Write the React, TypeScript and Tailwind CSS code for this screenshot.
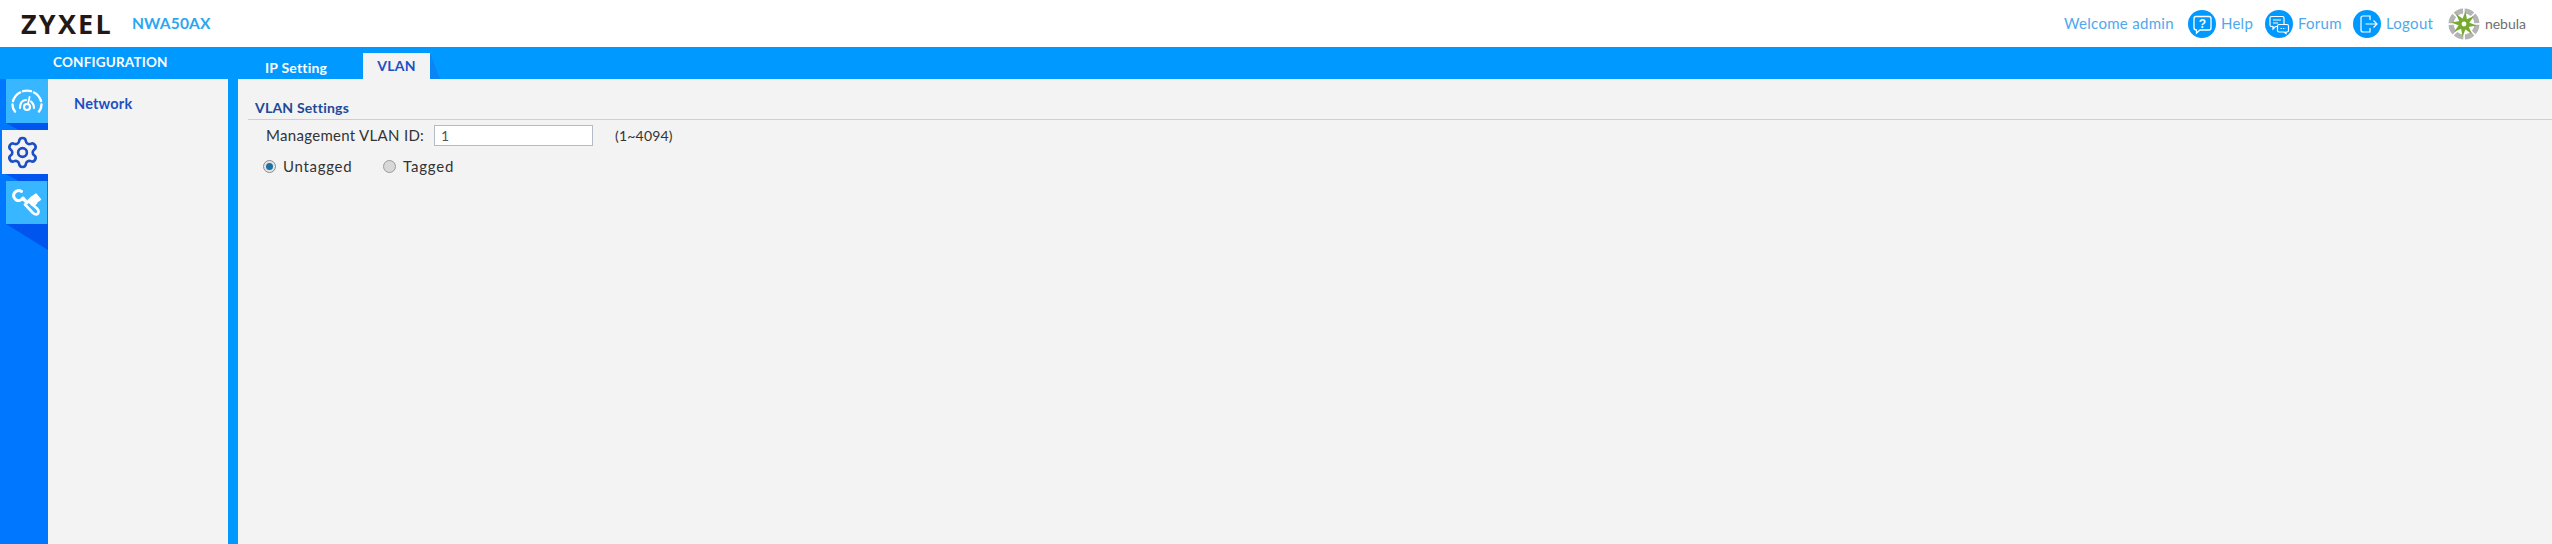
import { Settings } from 'lucide-react';

const NebulaLogo = () => {
    const angles = [0, 45, 90, 135, 180, 225, 270, 315];
    return (
        <svg width="32" height="32" viewBox="-17 -17 34 34">
            {angles.map((a) => (
                <g key={a} transform={`rotate(${a + 22})`}>
                    <path d="M-5.5 -15.5 Q0 -17.5 5.5 -15.5 L3.5 -10.5 Q0 -11.5 -3.5 -10.5 Z" fill="#b4b4b4" />
                </g>
            ))}
            {angles.map((a) => (
                <g key={a} transform={`rotate(${a})`}>
                    <path d="M-3 -1.5 L1.5 -13.5 L3.5 -3 Z" fill="#76ab2f" />
                </g>
            ))}
            <circle r="2.6" fill="#ffffff" />
        </svg>
    );
};

const HelpIcon = () => (
    <svg width="28" height="28" viewBox="0 0 28 28" fill="none" stroke="white" strokeWidth="1.3">
        <path d="M8 6.5H21Q23 6.5 23 8.5V18Q23 20 21 20H12L8.5 23V20Q6 20 6 18V8.5Q6 6.5 8 6.5Z" />
        <text x="14.5" y="17.5" fill="white" stroke="none" fontSize="12" fontWeight="700" textAnchor="middle" fontFamily="Liberation Sans, sans-serif">?</text>
    </svg>
);

const ForumIcon = () => (
    <svg width="28" height="28" viewBox="0 0 28 28" fill="none" stroke="white" strokeWidth="1.2">
        <path d="M6.5 6.5H17.5Q19 6.5 19 8V15Q19 16.5 17.5 16.5H10.5L8 19V16.5H6.5Q5 16.5 5 15V8Q5 6.5 6.5 6.5Z" />
        <path d="M8 10H16M8 13H13" />
        <path d="M14 14.5H22Q23.5 14.5 23.5 16V20.5Q23.5 22 22 22H21V23.5L19 22H14Q12.5 22 12.5 20.5V16Q12.5 14.5 14 14.5Z" fill="#0099ff" />
        <path d="M15.5 18.5H20.5" strokeDasharray="1.4 1" />
    </svg>
);

const LogoutIcon = () => (
    <svg width="28" height="28" viewBox="0 0 28 28" fill="none" stroke="white" strokeWidth="1.2">
        <path d="M17 10V6H10Q8 6 8 8V20Q8 22 10 22H17V18" />
        <path d="M12.5 14H24M20.5 10.5L24 14L20.5 17.5" />
    </svg>
);

const GaugeIcon = () => (
    <svg width="32" height="24" viewBox="0 0 32 24" fill="none" stroke="white" strokeLinecap="round">
        <path d="M4 22.5Q1.5 19.5 1.5 15.5" strokeWidth="2.4" />
        <path d="M2 12Q4 6 9 3.5M12 2.2Q16 1 20 2.2M23 3.5Q28 6 30 12" strokeWidth="2.4" />
        <path d="M30.5 15.5Q30.5 19.5 28 22.5" strokeWidth="2.4" />
        <path d="M9 19Q9 11.5 15 11M20 12.5Q23 15 23 19" strokeWidth="2.2" />
        <circle cx="16" cy="18" r="3" strokeWidth="2.2" />
        <path d="M17 15L18.5 8" strokeWidth="1.8" />
    </svg>
);

const ToolsIcon = () => (
    <svg width="30" height="28" viewBox="0 0 30 28" fill="none" stroke="white" strokeLinecap="round" strokeLinejoin="round">
        <path d="M9.5 2.5A5 5 0 1 0 11 9" strokeWidth="3" />
        <path d="M11 9.5L15 13.5" strokeWidth="3.4" />
        <path d="M28.5 10.5L24 5L19.5 8L16 11.5L20.5 16.5Q24.5 16 25 13Z" fill="white" strokeWidth="1.4" />
        <path d="M13 15.5L21 24Q24 26.5 26 24.5Q27.5 22 25 19.5L17.5 13" strokeWidth="2.6" />
    </svg>
);

const App = () => {
    return (
        <div className="h-[544px] w-[2552px] flex flex-col overflow-hidden bg-white font-['Lato','Open_Sans',sans-serif]">
            <header className="h-[47px] flex items-center justify-between pl-[21px] pr-[26px]">
                <div className="flex items-center">
                    <span className="text-[27px] font-bold tracking-[2.2px] leading-none text-[#231815] font-['Open_Sans',sans-serif]">ZYXEL</span>
                    <span className="ml-[19px] text-[15.5px] font-bold tracking-[0.2px] text-[#2ba6f0]">NWA50AX</span>
                </div>
                <div className="flex items-center text-[15px] tracking-[0.3px] text-[#4ea8ee]">
                    <span>Welcome admin</span>
                    <span className="ml-[14px] w-[28px] h-[28px] rounded-full bg-[#0099ff] flex items-center justify-center"><HelpIcon /></span>
                    <span className="ml-[5px] w-[30px]">Help</span>
                    <span className="ml-[14px] w-[28px] h-[28px] rounded-full bg-[#0099ff] flex items-center justify-center"><ForumIcon /></span>
                    <span className="ml-[5px] w-[41px]">Forum</span>
                    <span className="ml-[14px] w-[28px] h-[28px] rounded-full bg-[#0099ff] flex items-center justify-center"><LogoutIcon /></span>
                    <span className="ml-[5px] w-[47px]">Logout</span>
                    <span className="ml-[15px]"><NebulaLogo /></span>
                    <span className="ml-[5px] text-[14px] tracking-normal text-[#6f6f6f]">nebula</span>
                </div>
            </header>

            <div className="h-[32px] flex bg-[#0099ff]">
                <div className="w-[238px] pl-[53px] pt-[5px] text-[13.5px] font-bold tracking-[0.2px] leading-[20px] text-white">CONFIGURATION</div>
                <div className="flex items-end">
                    <div className="ml-[27px] w-[61px] pb-[1px] text-[14px] font-bold tracking-[0.2px] leading-[20px] text-white whitespace-nowrap">IP Setting</div>
                    <div className="ml-[37px] w-[67px] h-[26px] bg-[#f3f3f3] text-center text-[14px] font-bold tracking-[0.3px] leading-[25px] text-[#1d4fc4]">VLAN</div>
                    <div className="w-[10px] h-[26px] bg-[#0a85f5] [clip-path:polygon(0_0,0_100%,100%_100%)]"></div>
                </div>
            </div>

            <div className="flex-1 flex bg-[#0099ff]">
                <nav className="w-[48px] bg-[#0077ff] flex flex-col">
                    <div className="ml-[6px] h-[44px] bg-[#38b6ff] flex items-center justify-center"><GaugeIcon /></div>
                    <div className="ml-[6px] h-[7px] bg-[#0055ee] [clip-path:polygon(0_0,100%_0,100%_100%,30%_100%)]"></div>
                    <div className="ml-[2px] h-[44px] bg-[#f3f3f3] flex items-center justify-start pl-[3px]">
                        <Settings className="w-[35px] h-[35px] text-[#1d4fc4]" strokeWidth={1.8} />
                    </div>
                    <div className="ml-[6px] h-[7px] bg-[#0055ee] [clip-path:polygon(0_0,100%_0,100%_100%,30%_100%)]"></div>
                    <div className="ml-[6px] mr-[1px] h-[43px] bg-[#38b6ff] flex items-center justify-center"><ToolsIcon /></div>
                    <div className="ml-[6px] h-[26px] bg-[#0055ee] [clip-path:polygon(0_0,100%_0,100%_100%)]"></div>
                </nav>

                <aside className="w-[180px] bg-[#f3f3f3] pl-[26px] pt-[12px]">
                    <span className="text-[14.5px] font-bold tracking-[0.2px] leading-[20px] text-[#1d4fc4]">Network</span>
                </aside>

                <main className="ml-[10px] flex-1 bg-[#f3f3f3] pl-[10px] text-[15px] tracking-[0.3px] text-[#333333]">
                    <div className="h-[41px] border-b border-[#cfcfcf] pl-[7px] pt-[19px] text-[14px] font-bold tracking-[0.2px] leading-[20px] text-[#1a4a9a]">VLAN Settings</div>
                    <div className="mt-[5px] flex items-center h-[21px] pl-[18px]">
                        <span className="w-[168px]">Management VLAN ID:</span>
                        <input readOnly value="1" className="w-[159px] h-[21px] border border-[#b3bcc4] bg-white pl-[6px] text-[14px] text-[#555555] outline-none" />
                        <span className="ml-[22px] text-[14px] tracking-[0.2px]">(1~4094)</span>
                    </div>
                    <div className="mt-[9px] flex items-center h-[22px] pl-[15px]">
                        <span className="w-[13px] h-[13px] rounded-full border border-[#8c8c8c] bg-[#e4e4e4] flex items-center justify-center">
                            <span className="w-[7px] h-[7px] rounded-full bg-[#1d6fa8]"></span>
                        </span>
                        <span className="ml-[7px] w-[100px] tracking-[0.7px]">Untagged</span>
                        <span className="w-[13px] h-[13px] rounded-full border border-[#9a9a9a] bg-[#d8d8d8]"></span>
                        <span className="ml-[7px] tracking-[0.8px]">Tagged</span>
                    </div>
                </main>
            </div>
        </div>
    );
};

export default App;
